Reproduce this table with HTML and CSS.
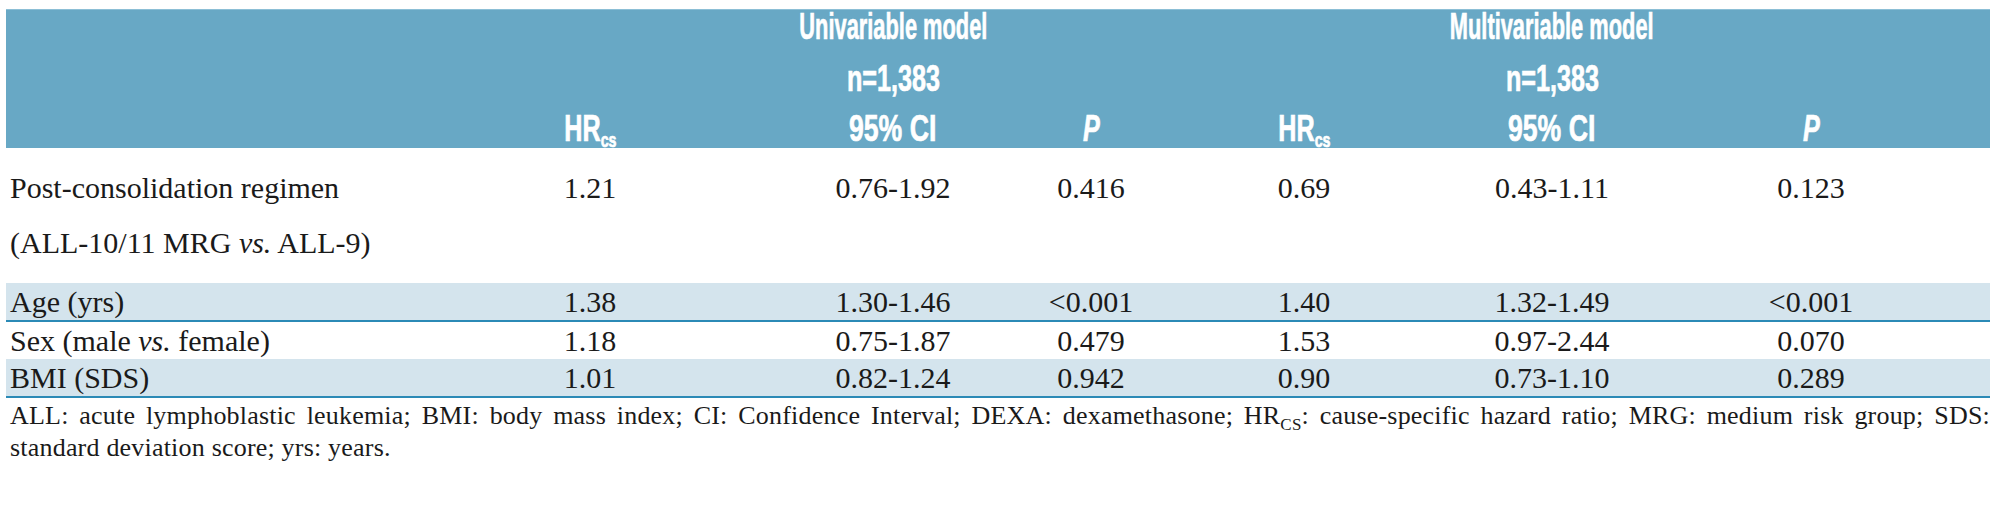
FILE: index.html
```html
<!DOCTYPE html>
<html lang="en">
<head>
<meta charset="utf-8">
<title>Cause-specific hazard ratios</title>
<link rel="stylesheet" href="styles.css">
</head>
<body>
<div class="wrap">
  <table class="tbl">
    <colgroup>
      <col class="c-label"><col class="c-hr1"><col class="c-ci1"><col class="c-p1"><col class="c-hr2"><col class="c-ci2"><col class="c-p2">
    </colgroup>
    <thead>
      <tr>
        <th></th>
        <th><span class="sq">HR<sub>cs</sub></span></th>
        <th>
          <div class="grp">
            <span class="sq title">Univariable model</span>
            <span class="sq num">n=1,383</span>
            <span class="sq ci">95% CI</span>
          </div>
        </th>
        <th><span class="sq"><i>P</i></span></th>
        <th><span class="sq">HR<sub>cs</sub></span></th>
        <th>
          <div class="grp">
            <span class="sq title">Multivariable model</span>
            <span class="sq num">n=1,383</span>
            <span class="sq ci">95% CI</span>
          </div>
        </th>
        <th><span class="sq"><i>P</i></span></th>
      </tr>
    </thead>
    <tbody>
      <tr class="first">
        <td class="lbl">Post-consolidation regimen<br>(ALL-10/11 MRG <i>vs.</i> ALL-9)</td>
        <td>1.21</td><td>0.76-1.92</td><td>0.416</td><td>0.69</td><td>0.43-1.11</td><td>0.123</td>
      </tr>
      <tr class="shade">
        <td class="lbl">Age (yrs)</td>
        <td>1.38</td><td>1.30-1.46</td><td>&lt;0.001</td><td>1.40</td><td>1.32-1.49</td><td>&lt;0.001</td>
      </tr>
      <tr>
        <td class="lbl">Sex (male <i>vs.</i> female)</td>
        <td>1.18</td><td>0.75-1.87</td><td>0.479</td><td>1.53</td><td>0.97-2.44</td><td>0.070</td>
      </tr>
      <tr class="shade">
        <td class="lbl">BMI (SDS)</td>
        <td>1.01</td><td>0.82-1.24</td><td>0.942</td><td>0.90</td><td>0.73-1.10</td><td>0.289</td>
      </tr>
    </tbody>
  </table>
  <p class="note">ALL: acute lymphoblastic leukemia; BMI: body mass index; CI: Confidence Interval; DEXA: dexamethasone; HR<sub>CS</sub>: cause-specific hazard ratio; MRG: medium risk group; SDS: standard deviation score; yrs: years.</p>
</div>
</body>
</html>
```
FILE: styles.css
```css
html, body {
  margin: 0;
  padding: 0;
  background: #ffffff;
}

.wrap {
  padding: 9px 10px 0 6px;
  width: 1984px;
}

.tbl {
  width: 1984px;
  table-layout: fixed;
  border-collapse: collapse;
  border-spacing: 0;
  font-family: "Liberation Serif", "Times New Roman", serif;
  font-size: 30px;
  color: #1a1a1a;
}

.c-label { width: 434px; }
.c-hr1 { width: 300px; }
.c-ci1 { width: 306px; }
.c-p1 { width: 90px; }
.c-hr2 { width: 336px; }
.c-ci2 { width: 160px; }
.c-p2 { width: 358px; }

.tbl thead tr {
  background: #68a8c5;
  height: 138px;
  border-top: 1px solid #8cbfd6;
}

.tbl th {
  font-family: "Liberation Sans", Arial, sans-serif;
  font-weight: bold;
  font-size: 37px;
  line-height: 34px;
  color: #ffffff;
  -webkit-text-stroke: 0.7px #ffffff;
  text-align: center;
  vertical-align: bottom;
  padding: 0 0 2px 0;
  white-space: nowrap;
}

.sq {
  display: inline-block;
  transform: scaleX(0.68);
  transform-origin: center center;
}

.sq.title { transform: scaleX(0.59); margin-bottom: 18px; }
.sq.num { transform: scaleX(0.68); margin-bottom: 16px; }
.sq.ci { transform: scaleX(0.72); }

.tbl th sub {
  font-size: 21px;
  line-height: 0;
  vertical-align: -6px;
}

.grp {
  display: flex;
  flex-direction: column;
  align-items: center;
}

.tbl td {
  text-align: center;
  vertical-align: top;
  line-height: 37px;
  padding: 0;
  white-space: nowrap;
}

.tbl td.lbl {
  text-align: left;
  padding-left: 4px;
}

.tbl tr.first td {
  line-height: 55px;
  padding: 12px 0 13px 0;
}

.tbl tr.first td.lbl {
  padding-left: 4px;
}

.tbl tr.shade {
  background: #d4e4ed;
  border-bottom: 2px solid #2b8ab6;
}

.note {
  margin: 2px 0 0 0;
  font-family: "Liberation Serif", "Times New Roman", serif;
  font-size: 26px;
  letter-spacing: 0.2px;
  line-height: 32px;
  color: #1a1a1a;
  text-align: justify;
  padding-left: 4px;
}

.note sub {
  font-size: 17px;
  line-height: 0;
}
```
